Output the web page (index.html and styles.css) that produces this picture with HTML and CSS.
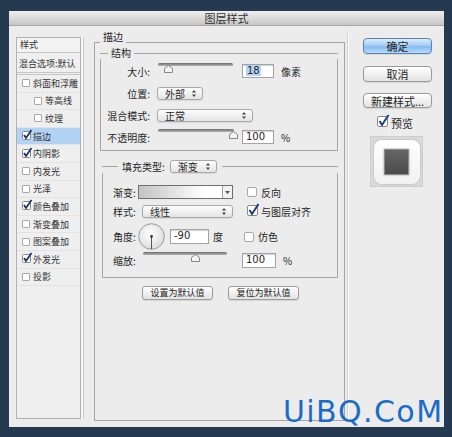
FILE: index.html
```html
<!DOCTYPE html>
<html lang="zh">
<head>
<meta charset="utf-8">
<title>图层样式</title>
<link rel="stylesheet" href="styles.css">
</head>
<body>
<div class="dialog">
  <div class="titlebar">图层样式</div>
  <div class="content">
    <div class="styles-list">
      <div class="list-head">样式</div>
      <div class="list-blend">混合选项:默认</div>
      <div class="list-item"><span class="cbw"><span class="cb"></span></span>斜面和浮雕</div>
      <div class="list-item sub"><span class="cbw"><span class="cb"></span></span>等高线</div>
      <div class="list-item sub"><span class="cbw"><span class="cb"></span></span>纹理</div>
      <div class="list-item active"><span class="cbw"><svg class="ck" width="11" height="11" viewBox="0 0 11 11"><rect x="0.5" y="2.5" width="8" height="8" rx="1" fill="#fff" stroke="#8a8a8a"/><path d="M2 6 L4 9 L9.5 1" fill="none" stroke="#1c3466" stroke-width="1.8"/></svg></span>描边</div>
      <div class="list-item"><span class="cbw"><svg class="ck" width="11" height="11" viewBox="0 0 11 11"><rect x="0.5" y="2.5" width="8" height="8" rx="1" fill="#fff" stroke="#8a8a8a"/><path d="M2 6 L4 9 L9.5 1" fill="none" stroke="#1c3466" stroke-width="1.8"/></svg></span>内阴影</div>
      <div class="list-item"><span class="cbw"><span class="cb"></span></span>内发光</div>
      <div class="list-item"><span class="cbw"><span class="cb"></span></span>光泽</div>
      <div class="list-item"><span class="cbw"><svg class="ck" width="11" height="11" viewBox="0 0 11 11"><rect x="0.5" y="2.5" width="8" height="8" rx="1" fill="#fff" stroke="#8a8a8a"/><path d="M2 6 L4 9 L9.5 1" fill="none" stroke="#1c3466" stroke-width="1.8"/></svg></span>颜色叠加</div>
      <div class="list-item"><span class="cbw"><span class="cb"></span></span>渐变叠加</div>
      <div class="list-item"><span class="cbw"><span class="cb"></span></span>图案叠加</div>
      <div class="list-item"><span class="cbw"><svg class="ck" width="11" height="11" viewBox="0 0 11 11"><rect x="0.5" y="2.5" width="8" height="8" rx="1" fill="#fff" stroke="#8a8a8a"/><path d="M2 6 L4 9 L9.5 1" fill="none" stroke="#1c3466" stroke-width="1.8"/></svg></span>外发光</div>
      <div class="list-item"><span class="cbw"><span class="cb"></span></span>投影</div>
    </div>

    <div class="main">
      <div class="group outer">
        <div class="group-head head-bottom"><span class="group-title">描边</span></div>
        <div class="group-body outer-body">
          <div class="group struct">
            <div class="group-head head-struct"><span class="group-title">结构</span></div>
            <div class="group-body struct-body">
              <div class="frow">
                <span class="flabel">大小:</span>
                <div class="slider s-size"><div class="track"></div><svg class="thumb" style="left:6px" width="9" height="8" viewBox="0 0 9 8"><path d="M4.5 0.5 L8.5 3.5 L8.5 7.5 L0.5 7.5 L0.5 3.5 Z" fill="#f5f5f5" stroke="#858585"/></svg></div>
                <div class="num num-a"><span class="sel">18</span></div>
                <span class="unit">像素</span>
              </div>
              <div class="frow">
                <span class="flabel">位置:</span>
                <div class="select sel-pos"><span>外部</span><svg width="4" height="7" viewBox="0 0 4 7"><path d="M2 0 L4 2.5 L0 2.5 Z M0 4.5 L4 4.5 L2 7 Z" fill="#444"/></svg></div>
              </div>
              <div class="frow">
                <span class="flabel">混合模式:</span>
                <div class="select sel-mode"><span>正常</span><svg width="4" height="7" viewBox="0 0 4 7"><path d="M2 0 L4 2.5 L0 2.5 Z M0 4.5 L4 4.5 L2 7 Z" fill="#444"/></svg></div>
              </div>
              <div class="frow">
                <span class="flabel">不透明度:</span>
                <div class="slider s-opac"><div class="track"></div><svg class="thumb" style="left:71px" width="9" height="8" viewBox="0 0 9 8"><path d="M4.5 0.5 L8.5 3.5 L8.5 7.5 L0.5 7.5 L0.5 3.5 Z" fill="#f5f5f5" stroke="#858585"/></svg></div>
                <div class="num num-b">100</div>
                <span class="unit">%</span>
              </div>
            </div>
          </div>

          <div class="group fill">
            <div class="group-head head-fill"><span class="group-title">填充类型:</span><div class="select sel-fill"><span>渐变</span><svg width="4" height="7" viewBox="0 0 4 7"><path d="M2 0 L4 2.5 L0 2.5 Z M0 4.5 L4 4.5 L2 7 Z" fill="#444"/></svg></div></div>
            <div class="group-body fill-body">
              <div class="fr fr-grad">
                <span class="fl">渐变:</span>
                <div class="fc">
                  <div class="grad"><div class="grad-fill"></div><div class="grad-arrow"><svg width="5" height="3" viewBox="0 0 5 3"><path d="M0 0 L5 0 L2.5 3 Z" fill="#555"/></svg></div></div>
                </div>
                <div class="chk"><span class="cbw big"><span class="cb"></span></span>反向</div>
              </div>
              <div class="fr fr-style">
                <span class="fl">样式:</span>
                <div class="fc">
                  <div class="select sel-style"><span>线性</span><svg width="4" height="7" viewBox="0 0 4 7"><path d="M2 0 L4 2.5 L0 2.5 Z M0 4.5 L4 4.5 L2 7 Z" fill="#444"/></svg></div>
                </div>
                <div class="chk"><span class="cbw big"><svg class="ck" width="13" height="13" viewBox="0 0 13 13"><rect x="0.5" y="2.5" width="10" height="10" rx="1.5" fill="#fff" stroke="#8a8a8a"/><path d="M2.5 7 L5 11 L11.5 1" fill="none" stroke="#1d3f7e" stroke-width="2"/></svg></span>与图层对齐</div>
              </div>
              <div class="fr fr-angle">
                <span class="fl">角度:</span>
                <div class="fc">
                  <svg class="dial" width="27" height="27" viewBox="0 0 27 27"><defs><radialGradient id="dg" cx="45%" cy="40%" r="60%"><stop offset="0" stop-color="#ffffff"/><stop offset="1" stop-color="#dcdcdc"/></radialGradient></defs><circle cx="13.5" cy="13.5" r="12.8" fill="url(#dg)" stroke="#9a9a9a"/><line x1="13.5" y1="13.5" x2="13.5" y2="26" stroke="#555" stroke-width="1"/><circle cx="13.5" cy="13.5" r="1.4" fill="#333"/></svg>
                  <div class="num num-angle">-90</div>
                  <span class="unit deg">度</span>
                </div>
                <div class="chk chk-dither"><span class="cbw big"><span class="cb"></span></span>仿色</div>
              </div>
              <div class="fr fr-scale">
                <span class="fl">缩放:</span>
                <div class="slider s-scale"><div class="track"></div><svg class="thumb" style="left:48px" width="9" height="8" viewBox="0 0 9 8"><path d="M4.5 0.5 L8.5 3.5 L8.5 7.5 L0.5 7.5 L0.5 3.5 Z" fill="#f5f5f5" stroke="#858585"/></svg></div>
                <div class="num num-scale">100</div>
                <span class="unit">%</span>
              </div>
            </div>
          </div>

          <div class="defaults">
            <div class="dbtn">设置为默认值</div>
            <div class="dbtn">复位为默认值</div>
          </div>
        </div>
      </div>
    </div>

    <div class="side">
      <div class="btn btn-ok">确定</div>
      <div class="btn btn-cancel">取消</div>
      <div class="btn btn-new">新建样式...</div>
      <div class="preview-chk"><span class="cbw big"><svg class="ck" width="13" height="13" viewBox="0 0 13 13"><rect x="0.5" y="2.5" width="10" height="10" rx="1.5" fill="#fff" stroke="#8a8a8a"/><path d="M2.5 7 L5 11 L11.5 1" fill="none" stroke="#1d3f7e" stroke-width="2"/></svg></span>预览</div>
      <div class="preview">
        <div class="preview-card"><div class="preview-square"></div></div>
      </div>
    </div>
  </div>
</div>
<div class="watermark">UiBQ.CoM</div>
</body>
</html>
```

FILE: styles.css
```css
* { box-sizing: border-box; }

body {
  margin: 0;
  width: 452px;
  height: 437px;
  overflow: hidden;
  position: relative;
  background: #253a50;
  font-family: "Noto Sans CJK SC", "Noto Sans", sans-serif;
  color: #262626;
}

.dialog {
  margin: 11px 0 0 9px;
  width: 435px;
  height: 416px;
  background: #ececec;
  display: flex;
  flex-direction: column;
}

.titlebar {
  height: 15px;
  line-height: 14px;
  background: linear-gradient(#efefef, #c6c6c6);
  border-bottom: 1px solid #a8a8a8;
  text-align: center;
  font-size: 11px;
  color: #333;
}

.content {
  flex: 1;
  display: flex;
  padding: 5px 0 6px 7px;
}

/* left list */
.styles-list {
  width: 65px;
  flex: none;
  margin: 6px 0 2px;
  border: 1px solid #b2b2b2;
  background: #efefef;
  font-size: 9px;
  color: #333;
  box-shadow: 2px 0 0 #f8f8f8, 3px 0 0 #c8c8c8;
}

.list-head {
  height: 15px;
  line-height: 14px;
  padding-left: 3px;
  border-bottom: 1px solid #c6c6c6;
  background: #f3f3f3;
}

.list-blend {
  height: 22px;
  line-height: 21px;
  padding-left: 2px;
  border-bottom: 3px double #c6c6c6;
}

.list-item {
  height: 17.6px;
  display: flex;
  align-items: center;
  padding-left: 5px;
  gap: 1px;
  border-bottom: 1px solid #e3e3e3;
}

.list-item.sub { padding-left: 17px; }

.list-item.active { background: #b3d3f6; }

.cbw {
  width: 10px;
  height: 10px;
  flex: none;
  display: flex;
  align-items: center;
  position: relative;
  overflow: visible;
}

.cb {
  width: 8px;
  height: 8px;
  border: 1px solid #a9a9a9;
  border-radius: 1px;
  background: #fff;
}

.ck { position: absolute; left: 0; top: -2px; }

.cbw.big { width: 13px; height: 11px; }
.cbw.big .cb { width: 10px; height: 10px; border-radius: 2px; }
.cbw.big .ck { top: -3px; }

/* main column */
.main {
  width: 251px;
  flex: none;
  margin-left: 13px;
  display: flex;
  flex-direction: column;
}

.group { display: flex; flex-direction: column; }

.group-head {
  display: flex;
  align-items: center;
  height: 12px;
  font-size: 10px;
}

.group-head::before,
.group-head::after {
  content: "";
  height: 0;
  border-top: 1px solid #a6a6a6;
}

.group-head::before { width: 8px; }
.group-head::after { flex: 1; }

.head-bottom { align-items: flex-end; }
.head-bottom::before { width: 6px; }

.group-title { padding: 0 3px; line-height: 12px; }

.group-body {
  border: 1px solid #a6a6a6;
  border-top: none;
}

.outer { flex: 1; }

.outer-body {
  flex: 1;
  padding: 4px 6px 0 5px;
}

.struct-body { padding: 1px 0 2px; }

.frow {
  display: flex;
  align-items: center;
  height: 22px;
  font-size: 10px;
}

.flabel {
  width: 49px;
  margin-right: 7px;
  text-align: right;
}

.slider {
  position: relative;
  height: 16px;
  margin-left: 1px;
}

.track {
  height: 3px;
  border-radius: 2px;
  background: linear-gradient(#6d6d6d, #b3b3b3);
}

.thumb { position: absolute; top: 2px; }

.s-size { width: 75px; }
.s-opac { width: 76px; }

.num {
  height: 14px;
  border: 1px solid #a3a3a3;
  background: #fff;
  box-shadow: inset 0 1px 1px rgba(0, 0, 0, 0.18);
  font-size: 10px;
  line-height: 12px;
  padding-left: 3px;
  font-family: "DejaVu Sans", "Noto Sans", sans-serif;
}

.sel { background: #b4d4f5; padding: 0 1px; }

.num-a { width: 32px; margin-left: 9px; }
.num-b { width: 32px; margin-left: 8px; }

.unit { margin-left: 7px; font-size: 10px; }

.select {
  height: 13px;
  border: 1px solid #a8a8a8;
  border-radius: 3px;
  background: linear-gradient(#fdfdfd, #e4e4e4);
  box-shadow: 0 1px 1px rgba(0, 0, 0, 0.08);
  display: flex;
  align-items: center;
  justify-content: space-between;
  padding: 0 6px 0 7px;
  font-size: 10px;
  line-height: 11px;
}

.sel-pos { width: 46px; }
.sel-mode { width: 96px; }

/* fill group */
.fill { margin: 9px 0 0 2px; }

.head-fill { height: 13px; }
.head-fill::before { width: 16px; }
.head-fill .group-title { padding: 0 3px 0 4px; }
.head-fill::after { margin-left: 5px; }
.sel-fill { width: 47px; margin-left: 2px; }

.fill-body { padding: 12px 0 9px; }

.fr {
  display: flex;
  align-items: center;
  font-size: 10px;
}

.fl { width: 35px; padding-left: 10px; flex: none; }

.fc {
  width: 109px;
  display: flex;
  align-items: center;
  flex: none;
}

.fr-grad { height: 14px; }
.fr-style { height: 14px; margin-top: 5px; }
.fr-angle { height: 27px; margin-top: 5px; }
.fr-scale { height: 15px; margin-top: 3px; }

.grad {
  width: 95px;
  height: 14px;
  display: flex;
  border: 1px solid #6f6f6f;
}

.grad-fill {
  flex: 1;
  background: linear-gradient(to right, #c4c4c4, #ffffff 80%);
}

.grad-arrow {
  width: 10px;
  border-left: 1px solid #a0a0a0;
  background: #f2f2f2;
  display: flex;
  align-items: center;
  justify-content: center;
}

.sel-style { width: 91px; margin-left: 4px; }

.chk {
  display: flex;
  align-items: center;
  gap: 1px;
  font-size: 10px;
}

.chk-dither { margin-left: -3px; }

.dial { flex: none; }

.num-angle { width: 39px; margin-left: 5px; height: 15px; }
.deg { margin-left: 4px; }

.s-scale { width: 84px; margin-left: 5px; margin-top: -2px; }
.num-scale { width: 34px; margin-left: 15px; height: 15px; }

.defaults {
  display: flex;
  justify-content: center;
  gap: 15px;
  margin-top: 8px;
  padding-left: 3px;
}

.dbtn {
  width: 71px;
  height: 14px;
  border: 1px solid #9c9c9c;
  border-radius: 3px;
  background: linear-gradient(#ffffff, #e2e2e2);
  box-shadow: 0 1px 1px rgba(0, 0, 0, 0.1);
  font-size: 9px;
  line-height: 12px;
  text-align: center;
}

/* side */
.side {
  width: 97px;
  flex: none;
  margin-left: 2px;
  border-left: 1px solid #d2d2d2;
  box-shadow: inset 1px 0 0 #fbfbfb;
  display: flex;
  flex-direction: column;
  padding: 7px 0 0 15px;
}

.btn {
  width: 69px;
  height: 16px;
  border: 1px solid #9a9a9a;
  border-radius: 4px;
  background: linear-gradient(#ffffff, #e3e3e3);
  box-shadow: 0 1px 1px rgba(0, 0, 0, 0.1);
  font-size: 11px;
  line-height: 14px;
  text-align: center;
}

.btn-ok {
  border-color: #5b82b2;
  background: linear-gradient(#dcedfd, #a5cdf6 45%, #86bbf1 55%, #b7dafb);
}

.btn-cancel { margin-top: 12px; }
.btn-new { margin-top: 11px; height: 15px; }

.preview-chk {
  display: flex;
  align-items: center;
  gap: 1px;
  margin: 9px 0 0 14px;
  height: 11px;
  font-size: 11px;
}

.preview {
  width: 53px;
  height: 51px;
  margin: 8px 0 0 7px;
  background: #dadada;
  border: 1px solid #cdcdcd;
  display: flex;
  align-items: center;
  justify-content: center;
}

.preview-card {
  width: 46px;
  height: 44px;
  border-radius: 8px;
  background: linear-gradient(#ffffff, #f1f1f1);
  box-shadow: 0 0 2px rgba(0, 0, 0, 0.25);
  display: flex;
  align-items: center;
  justify-content: center;
}

.preview-square {
  width: 25px;
  height: 26px;
  background: linear-gradient(#666, #4a4a4a);
  border: 1px solid #8a8a8a;
  box-shadow: 0 0 2px rgba(0, 0, 0, 0.4);
}

.watermark {
  position: absolute;
  left: 283px;
  top: 397px;
  font-family: "DejaVu Sans", sans-serif;
  font-size: 30px;
  line-height: 30px;
  letter-spacing: 1.4px;
  color: #1b6cc7;
}
```
